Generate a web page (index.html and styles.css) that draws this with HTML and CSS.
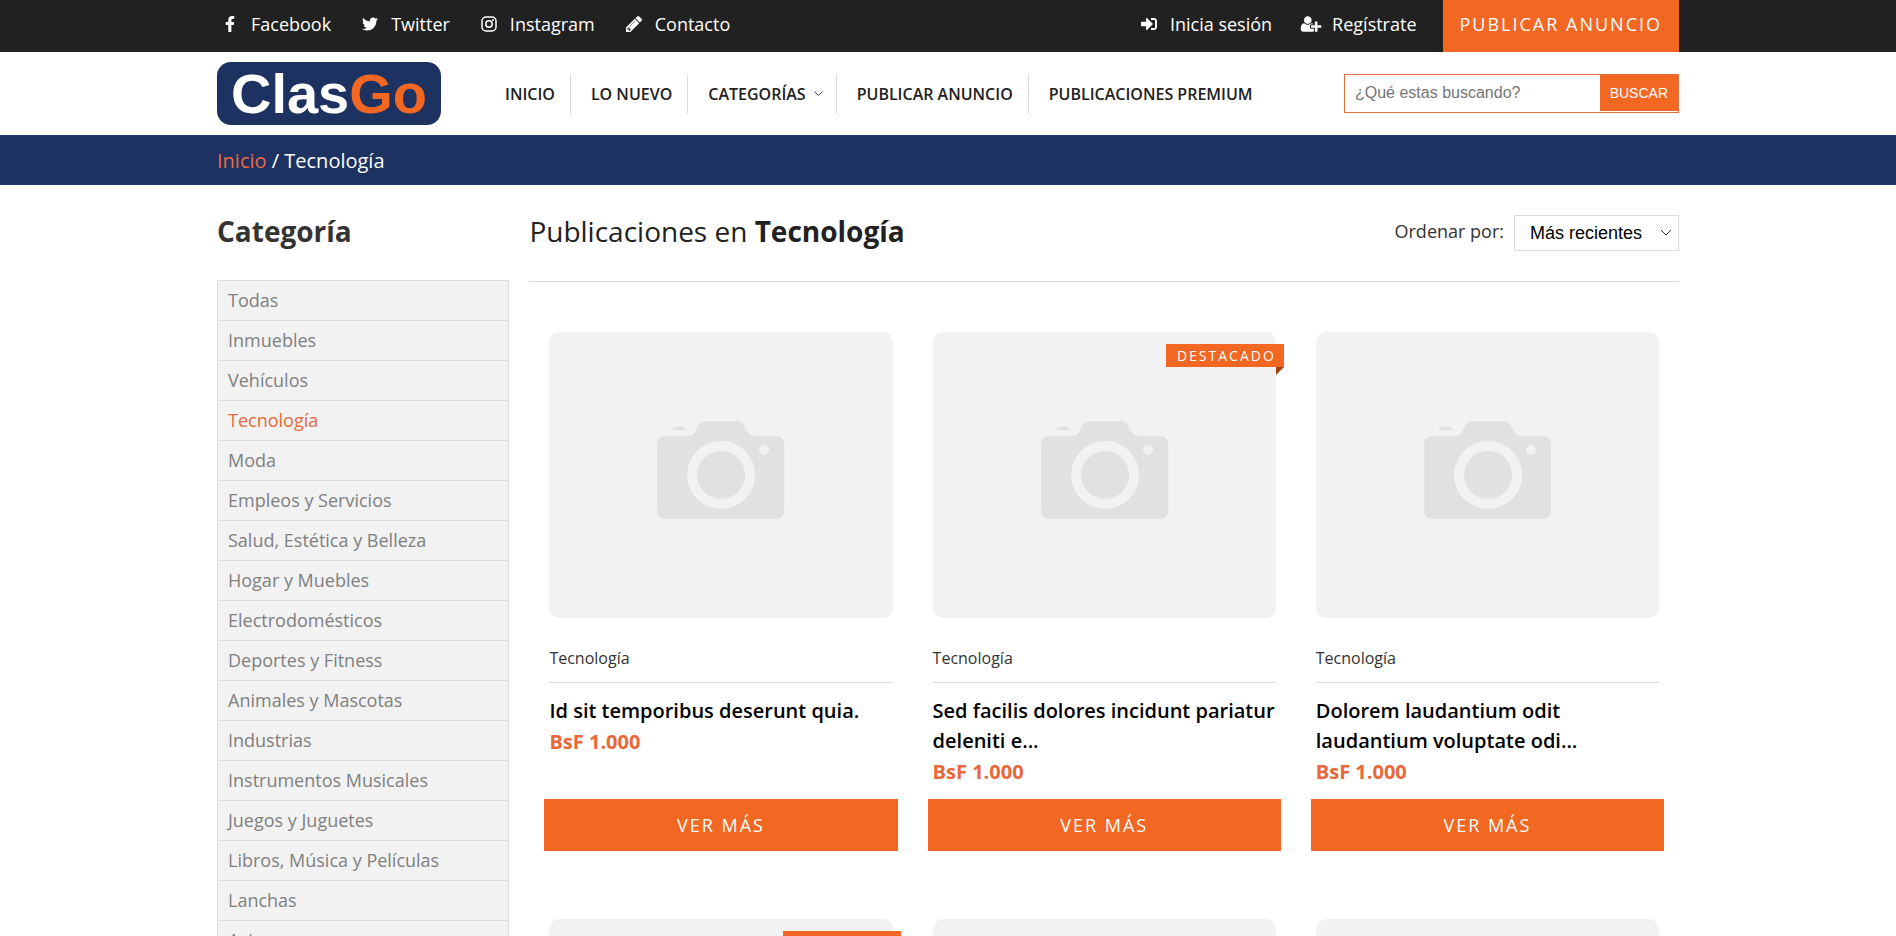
FILE: index.html
```html
<!DOCTYPE html>
<html lang="es">
<head>
<meta charset="utf-8">
<meta name="viewport" content="width=device-width, initial-scale=1">
<title>ClasGo - Tecnología</title>
<link rel="stylesheet" href="styles.css">
</head>
<body>
<svg class="sprite" aria-hidden="true">
  <symbol id="camera" viewBox="0 0 343 286">
    <path fill="#e1e1e1" d="M108 113a8 8 0 0 1 8-9h22c5 0 7-2 9-6 3-6 5-9 11-9h28c5 0 8 2 10 7 4 6 5 8 10 8h21a8 8 0 0 1 8 8v67a8 8 0 0 1-8 8H116a8 8 0 0 1-8-8zM122 98c2-5 13-5 15 0z"/>
    <circle cx="172" cy="143" r="29" fill="none" stroke="#f2f2f2" stroke-width="10"/>
    <circle cx="215" cy="118" r="5" fill="#f2f2f2"/>
  </symbol>
</svg>

<div class="topbar">
  <div class="container topbar-row">
    <nav class="top-links" aria-label="Redes sociales">
      <a class="top-link" href="#facebook"><svg class="icon" viewBox="0 0 320 512"><path d="M279.14 288l14.22-92.66h-88.91v-60.13c0-25.35 12.42-50.06 52.24-50.06h40.42V6.26S260.43 0 225.36 0c-73.22 0-121.08 44.38-121.08 124.72v70.62H22.89V288h81.39v224h100.17V288z"/></svg>Facebook</a>
      <a class="top-link" href="#twitter"><svg class="icon" viewBox="0 0 512 512"><path d="M459.37 151.716c.325 4.548.325 9.097.325 13.645 0 138.72-105.583 298.558-298.558 298.558-59.452 0-114.68-17.219-161.137-47.106 8.447.974 16.568 1.299 25.34 1.299 49.055 0 94.213-16.568 130.274-44.832-46.132-.975-84.792-31.188-98.112-72.772 6.498.974 12.995 1.624 19.818 1.624 9.421 0 18.843-1.3 27.614-3.573-48.081-9.747-84.143-51.98-84.143-102.985v-1.299c13.969 7.797 30.214 12.67 47.431 13.319-28.264-18.843-46.781-51.005-46.781-87.391 0-19.492 5.197-37.36 14.294-52.954 51.655 63.675 129.3 105.258 216.365 109.807-1.624-7.797-2.599-15.918-2.599-24.04 0-57.828 46.782-104.934 104.934-104.934 30.213 0 57.502 12.67 76.67 33.137 23.715-4.548 46.456-13.32 66.599-25.34-7.798 24.366-24.366 44.833-46.132 57.827 21.117-2.273 41.584-8.122 60.426-16.243-14.292 20.791-32.161 39.308-52.628 54.253z"/></svg>Twitter</a>
      <a class="top-link" href="#instagram"><svg class="icon" viewBox="0 0 16 16"><rect x="1" y="1" width="14" height="14" rx="4" fill="none" stroke="currentColor" stroke-width="1.500"/><circle cx="8" cy="8" r="3.200" fill="none" stroke="currentColor" stroke-width="1.500"/><circle cx="12" cy="4" r="1"/></svg>Instagram</a>
      <a class="top-link" href="#contacto"><svg class="icon" viewBox="0 149 1515 1515"><path d="M363 1536l91-91-235-235-91 91v107h128v128h107zM886 608q0-22-22-22-10 0-17 7l-542 542q-7 7-7 17 0 22 22 22 10 0 17-7l542-542q7-7 7-17zM832 416l416 416-832 832h-416v-416zM1515 512q0 53-37 90l-166 166-416-416 166-165q36-38 90-38 53 0 91 38l235 234q37 39 37 91z"/></svg>Contacto</a>
    </nav>
    <div class="account-links">
      <a class="top-link" href="#login"><svg class="icon" viewBox="0 0 512 512"><path d="M416 448h-84c-6.600 0-12-5.400-12-12v-40c0-6.600 5.400-12 12-12h84c17.700 0 32-14.300 32-32V160c0-17.700-14.300-32-32-32h-84c-6.600 0-12-5.400-12-12V76c0-6.600 5.400-12 12-12h84c53 0 96 43 96 96v192c0 53-43 96-96 96zm-47-209L201 71c-15-15-41-4.500-41 17v96H24c-13.300 0-24 10.700-24 24v96c0 13.300 10.700 24 24 24h136v96c0 21.500 26 32 41 17l168-168c9.300-9.400 9.300-24.600 0-34z"/></svg>Inicia sesión</a>
      <a class="top-link" href="#registro"><svg class="icon icon-wide" viewBox="0 0 2048 1792"><path d="M704 896q-159 0-271.500-112.500T320 512t112.500-271.500T704 128t271.500 112.500T1088 512 975.500 783.500 704 896zM1664 1024h352q13 0 22.500 9.500t9.500 22.500v192q0 13-9.500 22.500t-22.500 9.500h-352v352q0 13-9.500 22.500t-22.500 9.500h-192q-13 0-22.500-9.500t-9.500-22.500v-352h-352q-13 0-22.500-9.500t-9.500-22.500v-192q0-13 9.500-22.500t22.500-9.500h352v-352q0-13 9.500-22.500t22.500-9.500h192q13 0 22.500 9.500t9.500 22.500v352zM928 1248q0 52 38 90t90 38h256v238q-68 50-171 50h-874q-121 0-194-69t-73-190q0-53 3.500-103.500t14-109 26.500-108.500 43-97.500 62-81 85.500-53.500 111.500-20q19 0 39 17 79 61 154.500 91.500t164.500 30.500 164.500-30.500 154.500-91.500q20-17 39-17 132 0 217 96h-223q-52 0-90 38t-38 90v192z"/></svg>Regístrate</a>
      <a class="publish" href="#publicar">PUBLICAR ANUNCIO</a>
    </div>
  </div>
</div>

<header class="container header">
  <a class="logo" href="#inicio">Clas<span class="logo-accent">Go</span></a>
  <nav class="main-nav" aria-label="Principal">
    <a class="nav-link" href="#inicio">INICIO</a>
    <a class="nav-link" href="#nuevo">LO NUEVO</a>
    <a class="nav-link" href="#categorias">CATEGORÍAS<svg class="chevron" viewBox="0 0 9 6"><path d="M.5.500l4 4 4-4"/></svg></a>
    <a class="nav-link" href="#publicar">PUBLICAR ANUNCIO</a>
    <a class="nav-link" href="#premium">PUBLICACIONES PREMIUM</a>
  </nav>
  <form class="search">
    <input class="search-input" type="text" placeholder="¿Qué estas buscando?" aria-label="¿Qué estas buscando?">
    <button class="search-button" type="submit">BUSCAR</button>
  </form>
</header>

<div class="breadcrumb">
  <div class="container"><a class="crumb-link" href="#inicio">Inicio</a> / Tecnología</div>
</div>

<div class="container page">
  <aside class="sidebar">
    <h2 class="sidebar-title">Categoría</h2>
    <ul class="categories">
      <li><a class="category" href="#c">Todas</a></li>
      <li><a class="category" href="#c">Inmuebles</a></li>
      <li><a class="category" href="#c">Vehículos</a></li>
      <li><a class="category active" href="#c">Tecnología</a></li>
      <li><a class="category" href="#c">Moda</a></li>
      <li><a class="category" href="#c">Empleos y Servicios</a></li>
      <li><a class="category" href="#c">Salud, Estética y Belleza</a></li>
      <li><a class="category" href="#c">Hogar y Muebles</a></li>
      <li><a class="category" href="#c">Electrodomésticos</a></li>
      <li><a class="category" href="#c">Deportes y Fitness</a></li>
      <li><a class="category" href="#c">Animales y Mascotas</a></li>
      <li><a class="category" href="#c">Industrias</a></li>
      <li><a class="category" href="#c">Instrumentos Musicales</a></li>
      <li><a class="category" href="#c">Juegos y Juguetes</a></li>
      <li><a class="category" href="#c">Libros, Música y Películas</a></li>
      <li><a class="category" href="#c">Lanchas</a></li>
      <li><a class="category" href="#c">Aviones</a></li>
    </ul>
  </aside>
  <main class="main">
    <div class="main-head">
      <h1 class="main-title">Publicaciones en <strong>Tecnología</strong></h1>
      <div class="sort">
        <label class="sort-label" for="sort">Ordenar por:</label>
        <span class="select-wrap">
          <select class="select" id="sort"><option>Más recientes</option></select>
          <svg class="select-arrow" viewBox="0 0 12 8"><path d="M1 1l5 5 5-5"/></svg>
        </span>
      </div>
    </div>
    <div class="cards">
      <article class="card">
        <div class="thumb"><svg class="photo"><use href="#camera"/></svg></div>
        <p class="card-category">Tecnología</p>
        <h3 class="card-title">Id sit temporibus deserunt quia.</h3>
        <p class="price">BsF 1.000</p>
        <a class="more" href="#ver">VER MÁS</a>
      </article>
      <article class="card">
        <div class="thumb"><svg class="photo"><use href="#camera"/></svg><span class="badge">DESTACADO</span></div>
        <p class="card-category">Tecnología</p>
        <h3 class="card-title">Sed facilis dolores incidunt pariatur deleniti e...</h3>
        <p class="price">BsF 1.000</p>
        <a class="more" href="#ver">VER MÁS</a>
      </article>
      <article class="card">
        <div class="thumb"><svg class="photo"><use href="#camera"/></svg></div>
        <p class="card-category">Tecnología</p>
        <h3 class="card-title">Dolorem laudantium odit laudantium voluptate odi...</h3>
        <p class="price">BsF 1.000</p>
        <a class="more" href="#ver">VER MÁS</a>
      </article>
      <article class="card">
        <div class="thumb"><svg class="photo"><use href="#camera"/></svg><span class="badge">DESTACADO</span></div>
      </article>
      <article class="card">
        <div class="thumb"><svg class="photo"><use href="#camera"/></svg></div>
      </article>
      <article class="card">
        <div class="thumb"><svg class="photo"><use href="#camera"/></svg></div>
      </article>
    </div>
  </main>
</div>
</body>
</html>
```
FILE: styles.css
```css
* { box-sizing: border-box; }

html { overflow: hidden; height: 100%; }

body {
  margin: 0;
  height: 100%;
  overflow: hidden;
  background: #fff;
  color: #333;
  font-family: "Open Sans", "Noto Sans", sans-serif;
  font-size: 18px;
  line-height: 24px;
}

a { color: inherit; text-decoration: none; }
h1, h2, h3, p, ul { margin: 0; padding: 0; }
ul { list-style: none; }

.sprite { display: none; }

.container {
  width: 100%;
  max-width: 1462px;
  margin: 0 auto;
}

/* Top bar */
.topbar { background: #212121; color: #fff; }
.topbar-row {
  display: flex;
  justify-content: space-between;
  align-items: stretch;
}
.top-links, .account-links { display: flex; gap: 28px; }
.top-links { padding-left: 2px; }
.top-link {
  display: flex;
  align-items: center;
  gap: 10px;
  padding-bottom: 4px;
}
.icon {
  width: 22px;
  height: 16px;
  fill: currentColor;
}
.icon-wide { height: 18px; }
.publish {
  margin-left: -2px;
  padding: 12px 17px 16px;
  background: #f26722;
  letter-spacing: 2px;
}

/* Header */
.header {
  display: flex;
  align-items: center;
  padding: 10px 0;
}
.logo {
  width: 224px;
  border-radius: 14px;
  background: #1d3260;
  color: #fff;
  font: bold 56px/63px "Liberation Sans", Arial, sans-serif;
  text-align: center;
}
.logo-accent { color: #f26722; }
.main-nav { display: flex; margin-left: 44px; }
.nav-link {
  display: flex;
  align-items: center;
  padding: 8px 15px 8px 20px;
  border-right: 1px solid #ddd;
  color: #212121;
  font-size: 16px;
  font-weight: 600;
}
.nav-link:last-child { border-right: 0; }
.chevron {
  width: 9px;
  height: 6px;
  margin: 0 -2px 0 8px;
  fill: none;
  stroke: #444;
}
.search {
  display: flex;
  align-items: flex-start;
  width: 335px;
  height: 39px;
  margin-left: auto;
  border: 1px solid #e2703c;
}
.search-input {
  flex: 1;
  min-width: 0;
  height: 36px;
  padding: 0 10px;
  border: 0;
  background: none;
  font: 16px "Liberation Sans", Arial, sans-serif;
}
.search-input::placeholder { color: #757575; opacity: 1; }
.search-button {
  height: 36px;
  padding: 0 10px;
  border: 0;
  background: #f26722;
  color: #fff;
  font: 14px "Liberation Sans", Arial, sans-serif;
}

/* Breadcrumb */
.breadcrumb {
  padding: 14px 0 12px;
  background: #1d3260;
  color: #fff;
  font-size: 20px;
}
.crumb-link { color: #ea6a45; }

/* Page */
.page { display: flex; gap: 20px; padding-top: 29px; }
.sidebar { width: 20%; flex: none; }
.sidebar-title {
  margin-bottom: 32px;
  font-size: 28px;
  line-height: 34px;
}
.categories { border: 1px solid #ddd; border-top: 0; background: #f2f2f2; }
.category {
  display: block;
  padding: 7px 10px 8px;
  border-top: 1px solid #ddd;
  color: #808080;
}
.active { color: #e9683a; }

.main { flex: 1; min-width: 0; }
.main-head {
  display: flex;
  justify-content: space-between;
  align-items: flex-start;
  padding-bottom: 30px;
  border-bottom: 1px solid #ddd;
}
.main-title {
  color: #212121;
  font-size: 28px;
  font-weight: 400;
  line-height: 34px;
}
.sort {
  display: flex;
  align-items: flex-start;
  gap: 10px;
}
.sort-label { padding-top: 5px; }
.select-wrap { position: relative; display: flex; padding-top: 1px; }
.select {
  appearance: none;
  width: 165px;
  height: 36px;
  padding: 0 15px;
  border: 1px solid #ddd;
  border-radius: 0;
  background: #fff;
  color: #000;
  font: 18px "Liberation Sans", Arial, sans-serif;
}
.select-arrow {
  position: absolute;
  top: 15px;
  right: 7px;
  width: 12px;
  height: 8px;
  fill: none;
  stroke: #333;
  pointer-events: none;
}

/* Cards */
.cards {
  display: grid;
  grid-template-columns: repeat(3, 1fr);
  padding-top: 30px;
}
.card {
  display: flex;
  flex-direction: column;
  padding: 20px 20px 48px;
}
.thumb {
  position: relative;
  aspect-ratio: 6 / 5;
  border-radius: 10px;
  background: #f2f2f2;
}
.photo { display: block; width: 100%; height: 100%; }
.badge {
  position: absolute;
  top: 12px;
  right: -8px;
  padding: 0 8px 0 11px;
  background: #f26722;
  color: #fff;
  font-size: 14px;
  line-height: 23px;
  letter-spacing: 2px;
}
.badge::after {
  content: "";
  position: absolute;
  top: 100%;
  right: 0;
  border-top: 8px solid #a3420f;
  border-right: 8px solid transparent;
}
.card-category {
  padding: 28px 0 12px;
  border-bottom: 1px solid #ddd;
  font-size: 16px;
}
.card-title {
  margin-top: 13px;
  color: #000;
  font-size: 20px;
  font-weight: 600;
  line-height: 30px;
}
.price {
  margin: 1px 0 12px;
  color: #e9683a;
  font-size: 20px;
  font-weight: 700;
  line-height: 30px;
}
.more {
  margin: auto -5px 0;
  padding: 14px 0;
  background: #f26722;
  color: #fff;
  letter-spacing: 2px;
  text-align: center;
}
```
